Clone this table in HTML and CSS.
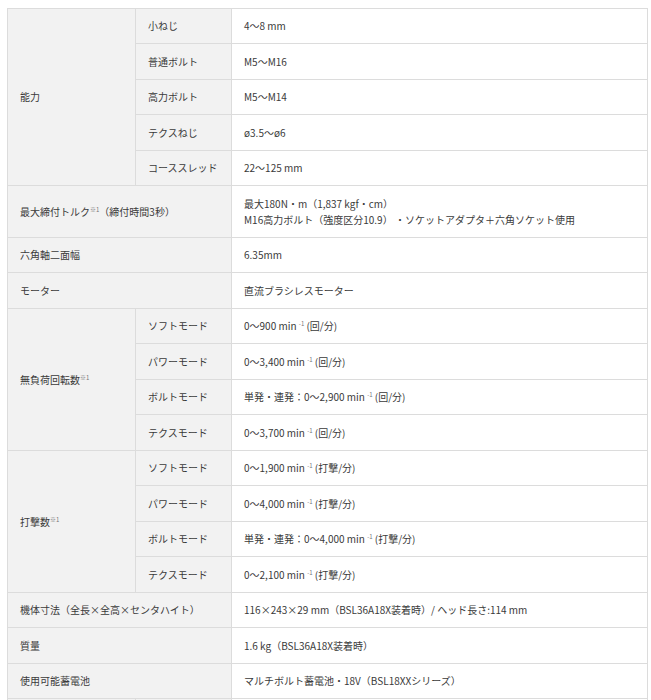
FILE: index.html
```html
<!DOCTYPE html>
<html lang="ja">
<head>
<meta charset="utf-8">
<title>仕様</title>
<link rel="stylesheet" href="styles.css">
</head>
<body>
<div class="wrap">
<table class="spec">
  <colgroup>
    <col class="c1">
    <col class="c2">
    <col class="c3">
  </colgroup>
  <tbody>
    <tr><th rowspan="5">能力</th><th>小ねじ</th><td>4～8 mm</td></tr>
    <tr><th>普通ボルト</th><td>M5～M16</td></tr>
    <tr><th>高力ボルト</th><td>M5～M14</td></tr>
    <tr><th>テクスねじ</th><td>ø3.5～ø6</td></tr>
    <tr><th>コーススレッド</th><td>22～125 mm</td></tr>
    <tr><th colspan="2">最大締付トルク<sup>※1</sup>（締付時間3秒）</th><td>最大180N・m（1,837 kgf・cm）<br>M16高力ボルト（強度区分10.9） ・ソケットアダプタ＋六角ソケット使用</td></tr>
    <tr><th colspan="2">六角軸二面幅</th><td>6.35mm</td></tr>
    <tr><th colspan="2">モーター</th><td>直流ブラシレスモーター</td></tr>
    <tr><th rowspan="4">無負荷回転数<sup>※1</sup></th><th>ソフトモード</th><td>0～900 min <sup>-1</sup> (回/分)</td></tr>
    <tr><th>パワーモード</th><td>0～3,400 min <sup>-1</sup> (回/分)</td></tr>
    <tr><th>ボルトモード</th><td>単発・連発：0～2,900 min <sup>-1</sup> (回/分)</td></tr>
    <tr><th>テクスモード</th><td>0～3,700 min <sup>-1</sup> (回/分)</td></tr>
    <tr><th rowspan="4">打撃数<sup>※1</sup></th><th>ソフトモード</th><td>0～1,900 min <sup>-1</sup> (打撃/分)</td></tr>
    <tr><th>パワーモード</th><td>0～4,000 min <sup>-1</sup> (打撃/分)</td></tr>
    <tr><th>ボルトモード</th><td>単発・連発：0～4,000 min <sup>-1</sup> (打撃/分)</td></tr>
    <tr><th>テクスモード</th><td>0～2,100 min <sup>-1</sup> (打撃/分)</td></tr>
    <tr><th colspan="2">機体寸法（全長×全高×センタハイト）</th><td>116×243×29 mm（BSL36A18X装着時）/ ヘッド長さ:114 mm</td></tr>
    <tr><th colspan="2">質量</th><td>1.6 kg（BSL36A18X装着時）</td></tr>
    <tr><th colspan="2">使用可能蓄電池</th><td>マルチボルト蓄電池・18V（BSL18XXシリーズ）</td></tr>
    <tr><th>&nbsp;</th><th>&nbsp;</th><td>&nbsp;</td></tr>
  </tbody>
</table>
</div>
</body>
</html>
```
FILE: styles.css
```css
html, body {
  margin: 0;
  padding: 0;
  background: #ffffff;
}
body {
  font-family: "Noto Sans CJK JP", "Noto Sans", sans-serif;
  font-size: 10px;
  color: #3a3a3a;
}
.wrap {
  padding: 8px 0 0 7px;
}
.spec {
  width: 640px;
  border-collapse: collapse;
  table-layout: fixed;
}
.spec .c1 { width: 128px; }
.spec .c2 { width: 96px; }
.spec .c3 { width: 416px; }
.spec th,
.spec td {
  border: 1px solid #dcdcdc;
  padding: 9px 12px;
  line-height: 16px;
  text-align: left;
  vertical-align: middle;
  font-weight: normal;
  white-space: nowrap;
}
.spec tr:nth-child(even) th,
.spec tr:nth-child(even) td {
  padding-top: 9.5px;
  padding-bottom: 9.5px;
}
.spec th {
  background: #f2f2f2;
}
.spec td {
  background: #ffffff;
}
.spec sup {
  font-size: 6px;
  line-height: 0;
  vertical-align: 4px;
  color: #777;
}
```
